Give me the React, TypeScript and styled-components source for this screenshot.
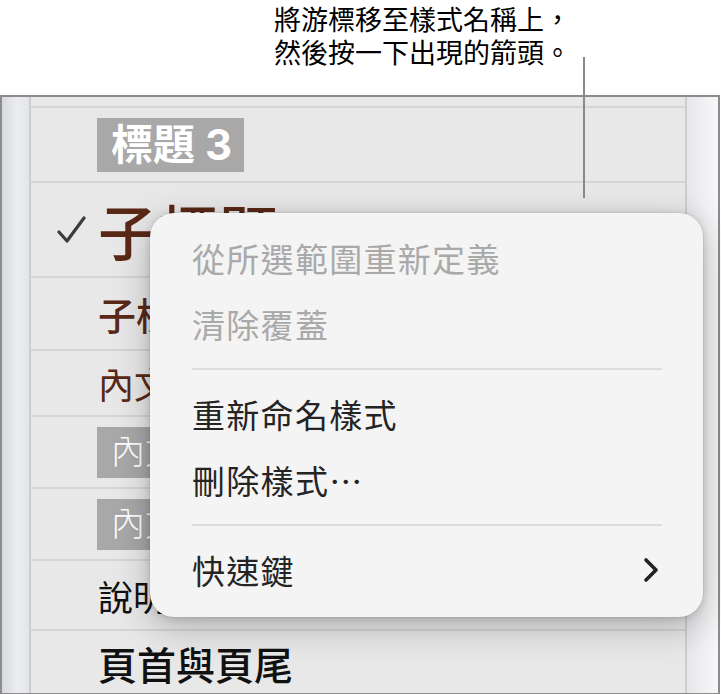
import React from "react";
import styled, { createGlobalStyle } from "styled-components";

const GlobalStyle = createGlobalStyle`
    html, body {
        margin: 0;
        padding: 0;
        background: #ffffff;
    }
    body {
        font-family: "Inter", "Noto Sans CJK TC", "Noto Sans", sans-serif;
        -webkit-font-smoothing: antialiased;
    }
`;

interface RowProps {
    h: number;
}

interface TextProps {
    size: number;
    weight?: number;
    tone?: "brown" | "black";
}

interface ItemProps {
    disabled?: boolean;
}

interface SepProps {
    gap: number;
}

const styles = [
    { name: "", h: 11, size: 0 },
    { name: "標題 3", h: 75, size: 42, weight: 700, tag: true },
    { name: "子標題", h: 95, size: 60, weight: 500, tone: "brown", checked: true },
    { name: "子標題", h: 73, size: 38, weight: 500, tone: "brown" },
    { name: "內文", h: 66, size: 36, weight: 400, tone: "brown" },
    { name: "內文", h: 72, size: 34, weight: 300, tag: true },
    { name: "內文", h: 72, size: 34, weight: 300, tag: true },
    { name: "說明", h: 70, size: 35, weight: 400, tone: "black" },
    { name: "頁首與頁尾", h: 64, size: 39, weight: 500, tone: "black", last: true },
];

const CheckIcon = () => (
    <svg width="30" height="30" viewBox="0 0 30 30" fill="none">
        <path d="M3 16 L11 25 L28 2" stroke="#3c3c3c" strokeWidth="3.2" strokeLinecap="round" strokeLinejoin="round" />
    </svg>
);

const ChevronIcon = () => (
    <svg width="18" height="26" viewBox="0 0 18 26" fill="none">
        <path d="M4 3 L14 13 L4 23" stroke="#222222" strokeWidth="3.6" strokeLinecap="round" strokeLinejoin="round" />
    </svg>
);

const App = () => {
    return (
        <Page>
            <GlobalStyle />
            <Callout>
                將游標移至樣式名稱上，
                <br />
                然後按一下出現的箭頭。
            </Callout>

            <Frame>
                <LeftGutter />
                <StyleList>
                    {styles.map((s, i) => (
                        <Row key={i} h={s.h} last={s.last}>
                            {s.checked && (
                                <Check>
                                    <CheckIcon />
                                </Check>
                            )}
                            {s.name &&
                                (s.tag ? (
                                    <Tag size={s.size} weight={s.weight}>
                                        {s.name}
                                    </Tag>
                                ) : (
                                    <StyleName size={s.size} weight={s.weight} tone={s.tone as "brown" | "black"}>
                                        {s.name}
                                    </StyleName>
                                ))}
                        </Row>
                    ))}
                </StyleList>
                <RightGutter />
            </Frame>

            <Leader />

            <Menu>
                <Item disabled>從所選範圍重新定義</Item>
                <Item disabled>清除覆蓋</Item>
                <Separator gap={11} />
                <Item>重新命名樣式</Item>
                <Item>刪除樣式⋯</Item>
                <Separator gap={11} />
                <Item>
                    快速鍵
                    <ChevronIcon />
                </Item>
            </Menu>
        </Page>
    );
};

const Page = styled.div`
    position: relative;
    width: 721px;
    height: 694px;
    overflow: hidden;
    background: #ffffff;
`;

const Callout = styled.div`
    height: 95px;
    box-sizing: border-box;
    padding: 2px 0 0 274px;
    font-family: "Noto Sans CJK TC", sans-serif;
    font-size: 27px;
    line-height: 33px;
    color: #000000;
`;

const Frame = styled.div`
    display: flex;
    width: 720px;
    height: 599px;
    box-sizing: border-box;
    border: 2px solid #8c8c8c;
    border-bottom-width: 1px;
    background: #e8e8e8;
`;

const LeftGutter = styled.div`
    width: 27px;
    flex-shrink: 0;
    border-right: 2px solid #cdcdcf;
    background: linear-gradient(to right, #d9dade, #ecedf0 55%, #e4e5e8);
`;

const RightGutter = styled.div`
    width: 31px;
    flex-shrink: 0;
    border-left: 2px solid #cdcdcf;
    background: linear-gradient(to right, #e6e7ea, #f3f3f5 70%, #f6f6f8);
`;

const StyleList = styled.div`
    flex: 1;
    display: flex;
    flex-direction: column;
    overflow: hidden;
`;

const Row = styled.div<RowProps & { last?: boolean }>`
    position: relative;
    flex-shrink: 0;
    height: ${(p) => p.h}px;
    box-sizing: border-box;
    display: flex;
    align-items: center;
    padding-left: 67px;
    border-bottom: ${(p) => (p.last ? "none" : "2px solid #d5d5d5")};
`;

const Check = styled.div`
    position: absolute;
    left: 25px;
    top: 33px;
    display: flex;
`;

const StyleName = styled.span<TextProps>`
    font-family: "Noto Sans CJK TC", sans-serif;
    font-size: ${(p) => p.size}px;
    font-weight: ${(p) => p.weight ?? 400};
    line-height: 1;
    white-space: nowrap;
    color: ${(p) => (p.tone === "brown" ? "#5a2816" : "#111111")};
`;

const Tag = styled.span<TextProps>`
    display: inline-flex;
    align-items: center;
    margin-left: -1px;
    padding: 0 12px 0 14px;
    height: ${(p) => (p.size > 36 ? 54 : 51)}px;
    background: #a8a8a8;
    color: #ffffff;
    font-family: "Inter", "Noto Sans CJK TC", sans-serif;
    font-size: ${(p) => p.size}px;
    font-weight: ${(p) => p.weight ?? 400};
    line-height: 1;
    white-space: nowrap;
`;

const Leader = styled.div`
    position: absolute;
    left: 583px;
    top: 57px;
    width: 2px;
    height: 141px;
    background: #8a8a8a;
`;

const Menu = styled.div`
    position: absolute;
    left: 150px;
    top: 213px;
    width: 553px;
    height: 404px;
    box-sizing: border-box;
    padding: 12px 0 14px;
    display: flex;
    flex-direction: column;
    border-radius: 24px;
    background: #f4f4f4;
    box-shadow: 0 10px 36px rgba(0, 0, 0, 0.25), 0 1px 8px rgba(0, 0, 0, 0.14),
        0 0 0 1px rgba(0, 0, 0, 0.04);
`;

const Item = styled.div<ItemProps>`
    height: 66px;
    flex-shrink: 0;
    display: flex;
    align-items: center;
    justify-content: space-between;
    padding: 0 43px 0 42px;
    font-family: "Noto Sans CJK TC", sans-serif;
    font-size: 33px;
    letter-spacing: 1.3px;
    color: ${(p) => (p.disabled ? "#a9a9a9" : "#242424")};
`;

const Separator = styled.div<SepProps>`
    height: 2px;
    flex-shrink: 0;
    margin: ${(p) => p.gap}px 41px ${(p) => p.gap}px 42px;
    background: #dcdcdc;
`;

export default App;
